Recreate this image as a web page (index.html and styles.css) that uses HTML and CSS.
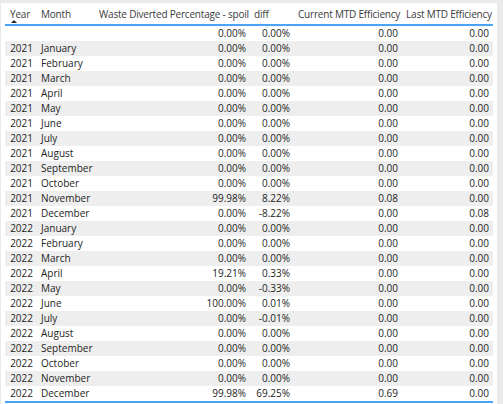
FILE: index.html
```html
<!DOCTYPE html>
<html lang="en">
<head>
  <meta charset="UTF-8">
  <title>Waste Diverted</title>
  <link rel="stylesheet" href="styles.css">
</head>
<body>
  <div class="visual">
    <table class="matrix">
      <colgroup>
        <col class="c-year"><col class="c-month"><col class="c-waste"><col class="c-diff"><col class="c-cur"><col class="c-last">
      </colgroup>
      <thead>
        <tr>
          <th class="sorted">Year<span class="arrow"></span></th>
          <th>Month</th>
          <th>Waste Diverted Percentage - spoil</th>
          <th>diff</th>
          <th>Current MTD Efficiency</th>
          <th>Last MTD Efficiency</th>
        </tr>
      </thead>
      <tbody>
        <tr><td></td><td></td><td class="num">0.00%</td><td class="num">0.00%</td><td class="num">0.00</td><td class="num">0.00</td></tr>
        <tr><td class="num">2021</td><td>January</td><td class="num">0.00%</td><td class="num">0.00%</td><td class="num">0.00</td><td class="num">0.00</td></tr>
        <tr><td class="num">2021</td><td>February</td><td class="num">0.00%</td><td class="num">0.00%</td><td class="num">0.00</td><td class="num">0.00</td></tr>
        <tr><td class="num">2021</td><td>March</td><td class="num">0.00%</td><td class="num">0.00%</td><td class="num">0.00</td><td class="num">0.00</td></tr>
        <tr><td class="num">2021</td><td>April</td><td class="num">0.00%</td><td class="num">0.00%</td><td class="num">0.00</td><td class="num">0.00</td></tr>
        <tr><td class="num">2021</td><td>May</td><td class="num">0.00%</td><td class="num">0.00%</td><td class="num">0.00</td><td class="num">0.00</td></tr>
        <tr><td class="num">2021</td><td>June</td><td class="num">0.00%</td><td class="num">0.00%</td><td class="num">0.00</td><td class="num">0.00</td></tr>
        <tr><td class="num">2021</td><td>July</td><td class="num">0.00%</td><td class="num">0.00%</td><td class="num">0.00</td><td class="num">0.00</td></tr>
        <tr><td class="num">2021</td><td>August</td><td class="num">0.00%</td><td class="num">0.00%</td><td class="num">0.00</td><td class="num">0.00</td></tr>
        <tr><td class="num">2021</td><td>September</td><td class="num">0.00%</td><td class="num">0.00%</td><td class="num">0.00</td><td class="num">0.00</td></tr>
        <tr><td class="num">2021</td><td>October</td><td class="num">0.00%</td><td class="num">0.00%</td><td class="num">0.00</td><td class="num">0.00</td></tr>
        <tr><td class="num">2021</td><td>November</td><td class="num">99.98%</td><td class="num">8.22%</td><td class="num">0.08</td><td class="num">0.00</td></tr>
        <tr><td class="num">2021</td><td>December</td><td class="num">0.00%</td><td class="num">-8.22%</td><td class="num">0.00</td><td class="num">0.08</td></tr>
        <tr><td class="num">2022</td><td>January</td><td class="num">0.00%</td><td class="num">0.00%</td><td class="num">0.00</td><td class="num">0.00</td></tr>
        <tr><td class="num">2022</td><td>February</td><td class="num">0.00%</td><td class="num">0.00%</td><td class="num">0.00</td><td class="num">0.00</td></tr>
        <tr><td class="num">2022</td><td>March</td><td class="num">0.00%</td><td class="num">0.00%</td><td class="num">0.00</td><td class="num">0.00</td></tr>
        <tr><td class="num">2022</td><td>April</td><td class="num">19.21%</td><td class="num">0.33%</td><td class="num">0.00</td><td class="num">0.00</td></tr>
        <tr><td class="num">2022</td><td>May</td><td class="num">0.00%</td><td class="num">-0.33%</td><td class="num">0.00</td><td class="num">0.00</td></tr>
        <tr><td class="num">2022</td><td>June</td><td class="num">100.00%</td><td class="num">0.01%</td><td class="num">0.00</td><td class="num">0.00</td></tr>
        <tr><td class="num">2022</td><td>July</td><td class="num">0.00%</td><td class="num">-0.01%</td><td class="num">0.00</td><td class="num">0.00</td></tr>
        <tr><td class="num">2022</td><td>August</td><td class="num">0.00%</td><td class="num">0.00%</td><td class="num">0.00</td><td class="num">0.00</td></tr>
        <tr><td class="num">2022</td><td>September</td><td class="num">0.00%</td><td class="num">0.00%</td><td class="num">0.00</td><td class="num">0.00</td></tr>
        <tr><td class="num">2022</td><td>October</td><td class="num">0.00%</td><td class="num">0.00%</td><td class="num">0.00</td><td class="num">0.00</td></tr>
        <tr><td class="num">2022</td><td>November</td><td class="num">0.00%</td><td class="num">0.00%</td><td class="num">0.00</td><td class="num">0.00</td></tr>
        <tr><td class="num">2022</td><td>December</td><td class="num">99.98%</td><td class="num">69.25%</td><td class="num">0.69</td><td class="num">0.00</td></tr>
      </tbody>
    </table>
  </div>
</body>
</html>
```

FILE: styles.css
```css
html, body {
  margin: 0;
  height: 100%;
  background-color: #eaeaea;
}
body {
  padding: 3px 0 0 1px;
  box-sizing: border-box;
  font-family: "Open Sans", "Noto Sans", sans-serif;
  font-size: 10px;
  color: #252423;
}
.visual {
  width: 496px;
  height: 401px;
  background-color: #ffffff;
  padding: 0 3px 0 4px;
  box-sizing: border-box;
}
.matrix {
  width: 488px;
  table-layout: fixed;
  border-collapse: collapse;
}
.c-year { width: 32px; }
.c-month { width: 58px; }
.c-waste { width: 155px; }
.c-diff { width: 44px; }
.c-cur { width: 108px; }
.c-last { width: 91px; }
.matrix th {
  height: 22px;
  padding: 4px 0 0 4px;
  text-align: left;
  font-weight: normal;
  letter-spacing: -0.2px;
  color: #3a3a3a;
  white-space: nowrap;
  vertical-align: top;
  box-sizing: border-box;
  border-bottom: 2px solid #4aa3f5;
}
.matrix th:first-child {
  padding-left: 5px;
}
.sorted {
  position: relative;
}
.arrow {
  position: absolute;
  left: 6px;
  top: 17px;
  width: 0;
  height: 0;
  border-left: 3px solid transparent;
  border-right: 3px solid transparent;
  border-bottom: 3px solid #252423;
}
.matrix td {
  height: 15px;
  padding: 0 4px;
  white-space: nowrap;
  line-height: 15px;
}
.matrix td.num {
  text-align: right;
}
.matrix tbody tr:nth-child(even) td {
  background-color: #eeeeee;
}
.matrix tbody tr:last-child td {
  border-bottom: 2px solid #4aa3f5;
}
```
